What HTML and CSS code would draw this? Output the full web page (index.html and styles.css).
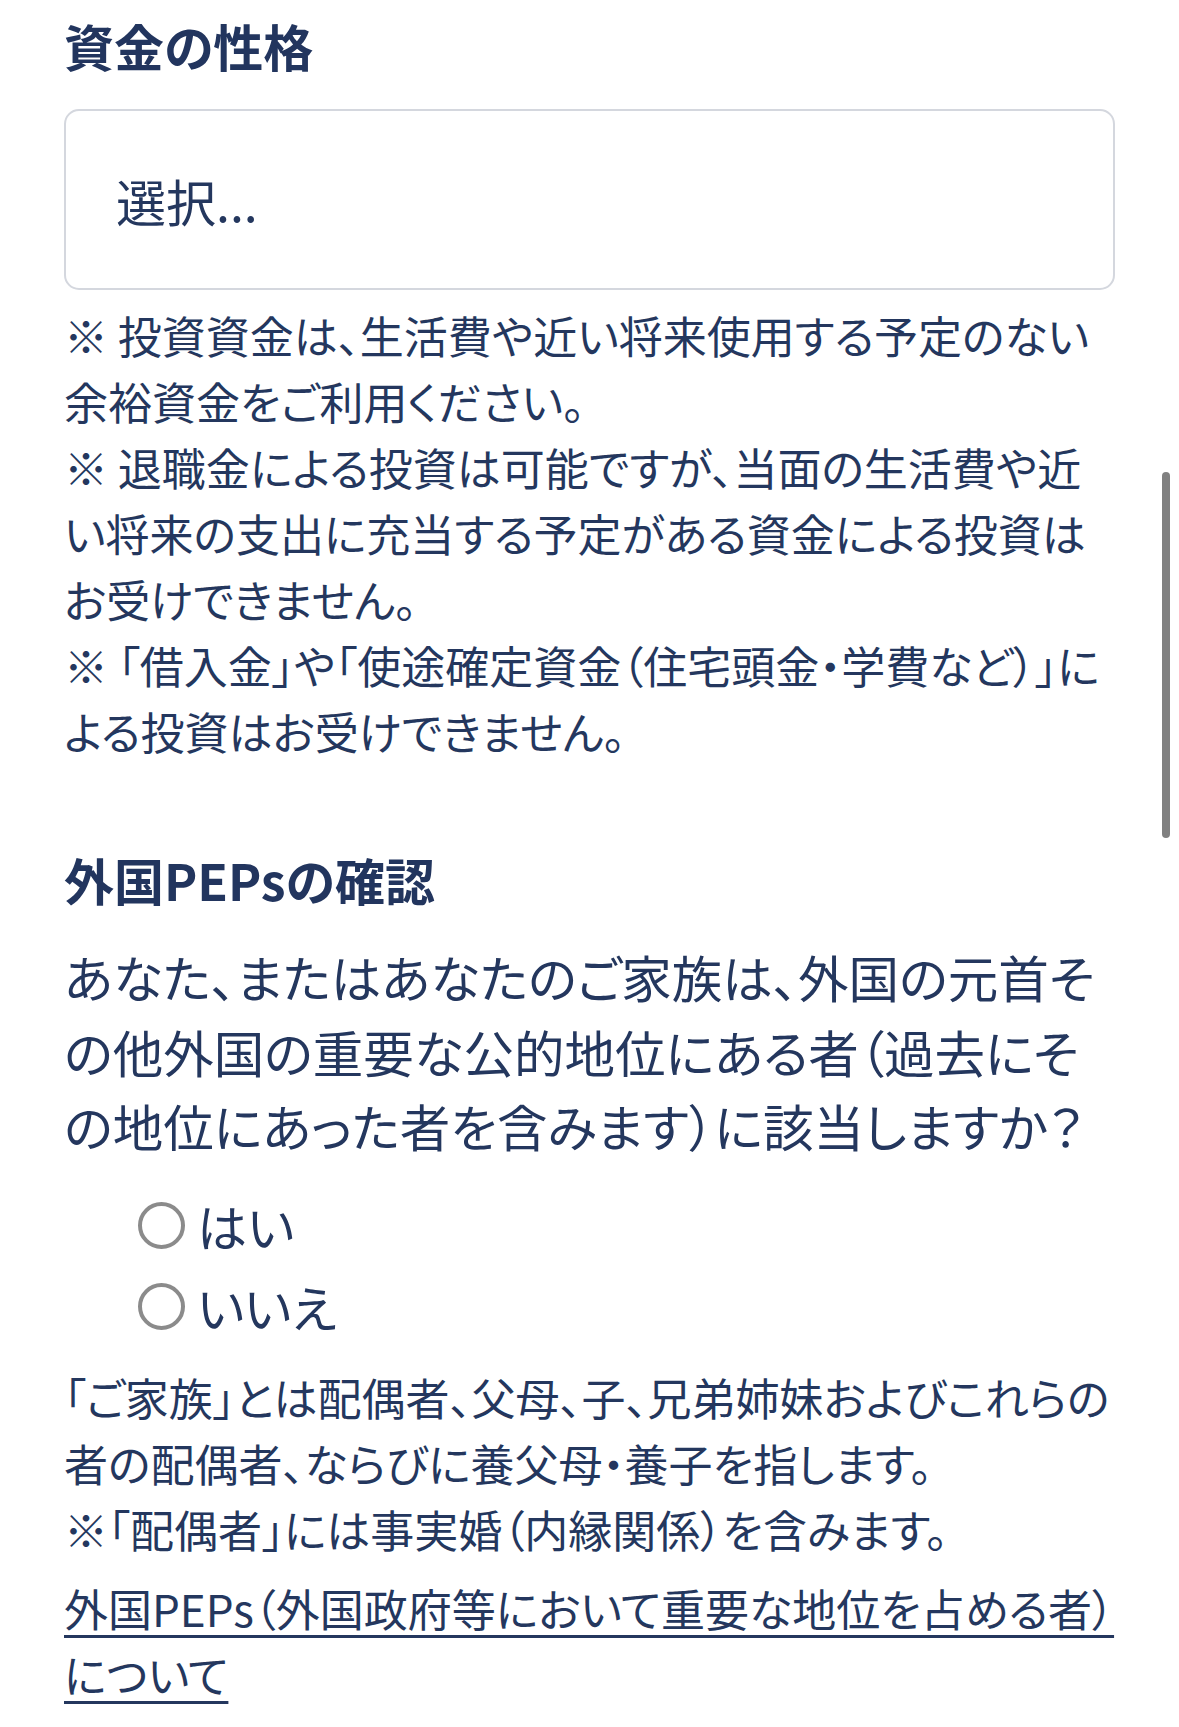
FILE: index.html
```html
<!DOCTYPE html>
<html lang="ja">
<head>
<meta charset="utf-8">
<title>資金の性格</title>
<link rel="stylesheet" href="styles.css">
</head>
<body>
<main class="page">
  <section class="field">
    <h2 class="heading">資金の性格</h2>
    <div class="select">選択...</div>
    <p class="note">※ 投資資金は、生活費や近い将来使用する予定のない<br>余裕資金をご利用ください。<br>※ 退職金による投資は可能ですが、当面の生活費や近<br>い将来の支出に充当する予定がある資金による投資は<br>お受けできません。<br>※ 「借入金」や「使途確定資金（住宅頭金・学費など）」に<br>よる投資はお受けできません。</p>
  </section>
  <section class="field pep">
    <h2 class="heading">外国PEPsの確認</h2>
    <p class="question">あなた、またはあなたのご家族は、外国の元首そ<br>の他外国の重要な公的地位にある者（過去にそ<br>の地位にあった者を含みます）に該当しますか？</p>
    <div class="radios">
      <label class="radio"><span class="circle"></span><span class="label">はい</span></label>
      <label class="radio"><span class="circle"></span><span class="label">いいえ</span></label>
    </div>
    <p class="note footer">「ご家族」とは配偶者、父母、子、兄弟姉妹およびこれらの<br>者の配偶者、ならびに養父母・養子を指します。<br>※「配偶者」には事実婚（内縁関係）を含みます。</p>
    <p class="link-row"><a class="link" href="#">外国PEPs（外国政府等において重要な地位を占める者）<br>について</a></p>
  </section>
</main>
<div class="scrollbar"></div>
</body>
</html>
```

FILE: styles.css
```css
html, body {
  margin: 0;
  padding: 0;
  background: #ffffff;
}
body {
  width: 1179px;
  height: 1727px;
  overflow: hidden;
  position: relative;
  font-family: "Noto Sans CJK JP", "Noto Sans", sans-serif;
  color: #24375e;
  font-feature-settings: "palt";
}
.page {
  padding: 9px 0 0 64px;
  width: 1051px;
}
.heading {
  margin: 0;
  font-size: 50px;
  line-height: 72px;
  font-weight: 700;
  color: #22355e;
}
.select {
  margin-top: 28px;
  height: 177px;
  border: 2px solid #d4d7de;
  border-radius: 15px;
  box-sizing: content-box;
  display: flex;
  align-items: center;
  padding: 0 0 0 50px;
  font-size: 50px;
  color: #24375e;
}
.note {
  margin: 12px 0 0;
  font-size: 44px;
  line-height: 66px;
  white-space: nowrap;
}
.pep {
  margin-top: 79px;
}
.question {
  margin: 24px 0 0;
  font-size: 50.5px;
  line-height: 74.5px;
  white-space: nowrap;
}
.radios {
  margin-top: 22px;
  padding-left: 74px;
  display: flex;
  flex-direction: column;
}
.radio {
  height: 81px;
  display: flex;
  align-items: center;
  gap: 12px;
}
.circle {
  width: 39px;
  height: 39px;
  border: 4px solid #8b8b8b;
  border-radius: 50%;
  flex: none;
}
.label {
  font-size: 50px;
  line-height: 81px;
}
.footer {
  margin-top: 17px;
}
.link-row {
  margin: 13px 0 0;
  font-size: 44px;
  line-height: 66px;
  white-space: nowrap;
}
.link {
  color: #24375e;
  text-decoration: underline;
  text-decoration-thickness: 3px;
  text-underline-offset: 8px;
}
.scrollbar {
  position: absolute;
  left: 1162px;
  top: 472px;
  width: 8px;
  height: 366px;
  border-radius: 4px;
  background: #808080;
}
```
